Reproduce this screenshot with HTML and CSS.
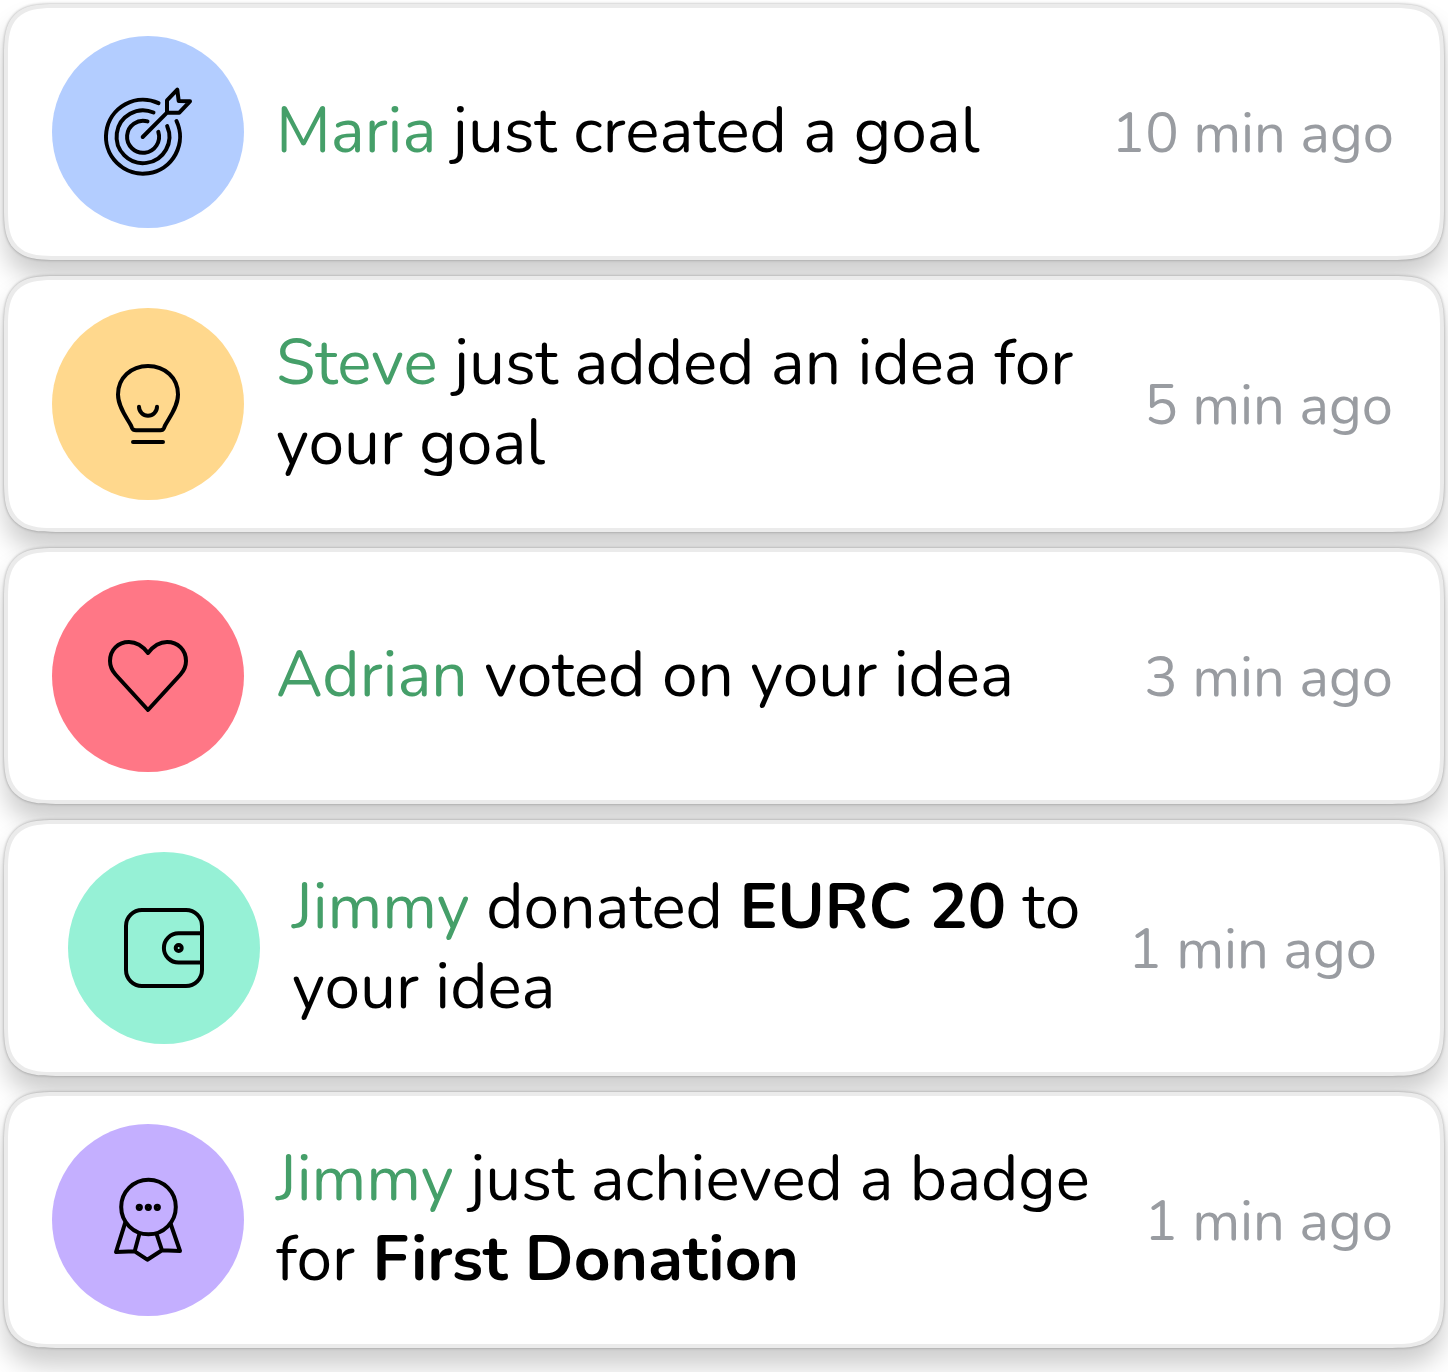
FILE: index.html
```html
<!DOCTYPE html>
<html lang="en">
<head>
<meta charset="utf-8">
<title>Activity</title>
<link rel="stylesheet" href="styles.css">
</head>
<body>
<main class="feed">
  <article class="card">
    <div class="avatar blue"><svg viewBox="0 0 96 96"><path d="M58.5 19.1A37 37 0 1 0 76.5 37M53.5 28.5A26.4 26.4 0 1 0 67.2 42.2M47.5 37.4A16 16 0 1 0 58.3 47.9M42.7 53 67 28.7V16.3L77.3 5.7 78.7 17 90 17.3 79.3 28.7H67"/></svg></div>
    <p class="message"><span class="line"><span class="name">Maria</span> just created a goal</span></p>
    <time class="time wide">10 min ago</time>
  </article>
  <article class="card">
    <div class="avatar yellow"><svg viewBox="0 0 96 96"><path d="M36 74.3H60.5Q63 74.3 64 72L65 69.5C69 62 78 51 78 38.5C78 22 65 10 48 10S18 22 18 38.5C18 51 27 62 31 69.5L32 72Q33 74.3 36 74.3ZM39 50.7A9 9 0 0 0 57 50.7M33 86H63"/></svg></div>
    <p class="message"><span class="line"><span class="name">Steve</span> just added an idea for</span><span class="line">your goal</span></p>
    <time class="time">5 min ago</time>
  </article>
  <article class="card">
    <div class="avatar red"><svg viewBox="0 0 96 96"><path d="M48 82 15.5 46.5C11.5 42 10 38 10 33C10 22 18 14 29 14C37 14 43 18.5 48 25C53 18.5 59 14 67 14C78 14 86 22 86 33C86 38 84.5 42 80.5 46.5Z"/></svg></div>
    <p class="message"><span class="line"><span class="name">Adrian</span> voted on your idea</span></p>
    <time class="time">3 min ago</time>
  </article>
  <article class="card inset">
    <div class="avatar green"><svg viewBox="0 0 96 96"><rect x="10" y="10" width="76" height="76" rx="16"/><path d="M86 33.3H62.5A14.5 14.5 0 0 0 62.5 62.5H86"/><circle cx="62.7" cy="48" r="3"/></svg></div>
    <p class="message"><span class="line"><span class="name">Jimmy</span> donated <b>EURC 20</b> to</span><span class="line">your idea</span></p>
    <time class="time">1 min ago</time>
  </article>
  <article class="card">
    <div class="avatar purple"><svg viewBox="0 0 96 96"><circle cx="48.5" cy="35" r="27.3"/><path d="M25 51.3 16 80 34.7 79.3 39.3 62.3M34.7 79.3 47.3 87.7 62 78.3 56.7 62.3M62 78.3 80 79 70.7 52"/><g class="dots"><circle cx="39.3" cy="35.3" r="1.9"/><circle cx="48.3" cy="35.3" r="1.9"/><circle cx="57.3" cy="35.3" r="1.9"/></g></svg></div>
    <p class="message"><span class="line"><span class="name">Jimmy</span> just achieved a badge</span><span class="line">for <b class="award">First Donation</b></span></p>
    <time class="time">1 min ago</time>
  </article>
</main>
</body>
</html>
```
FILE: styles.css
```css
* { box-sizing: border-box; }
body { margin: 0; background: #fff; font-family: "Nunito", "Lato", sans-serif; color: #000; overflow: hidden; }
.feed { display: flex; flex-direction: column; gap: 16px; padding: 4px; height: 1372px; }
.card {
  display: flex; align-items: center; flex: 0 0 256px;
  padding: 0 47px 0 44px;
  border: 4px solid #ebebeb; border-radius: 38px; background: #fff;
  box-shadow: 0 0 3px rgba(0,0,0,.33), 0 18px 26px rgba(0,0,0,.2);
}
@supports (corner-shape: superellipse(1.6)) {
  .card { border-radius: 52px; corner-shape: superellipse(1.6); }
}
.inset { padding: 0 63px 0 60px; }
.avatar { display: flex; align-items: center; justify-content: center; flex: 0 0 192px; height: 192px; border-radius: 50%; }
.avatar svg { width: 96px; height: 96px; fill: none; stroke: #000; stroke-width: 4; stroke-linecap: round; stroke-linejoin: round; }
.avatar .dots { stroke-width: 3.4; }
.blue { background: #b3cdff; }
.yellow { background: #ffd88d; }
.red { background: #ff7786; }
.green { background: #96f1d6; }
.purple { background: #c4afff; }
.message { flex: 1; margin: 0 0 0 32px; padding-bottom: 2px; font-size: 64px; line-height: 80px; white-space: nowrap; }
.line { display: block; }
.award { margin-left: 1px; }
.name { color: #459f69; }
.time { padding-top: 2px; font-size: 56px; color: #999ca1; white-space: nowrap; }
.wide { margin-right: -1px; }
```
